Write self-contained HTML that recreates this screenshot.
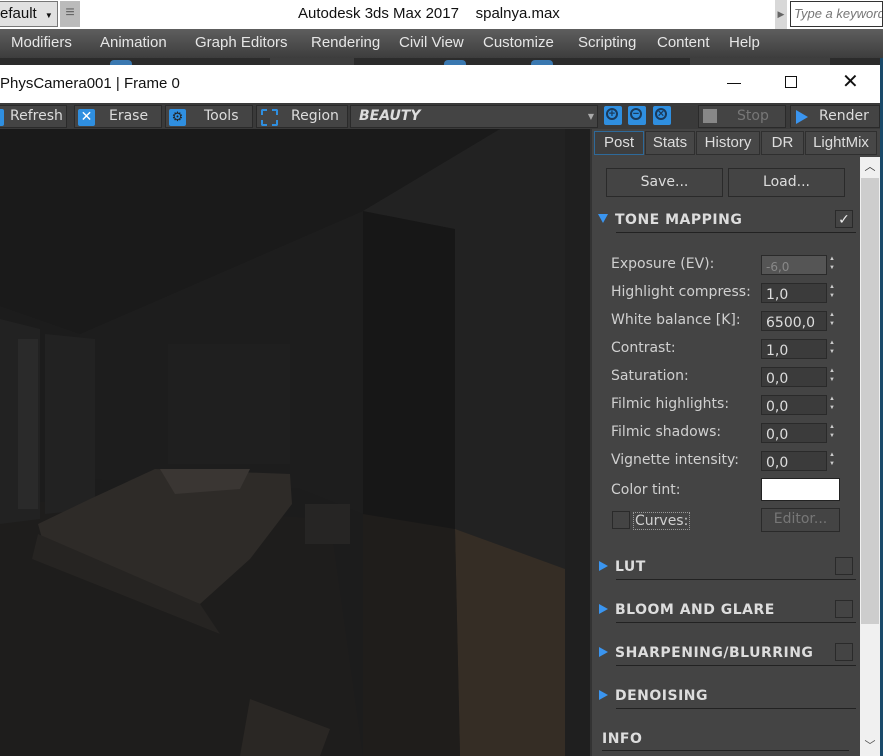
<!DOCTYPE html>
<html><head><meta charset="utf-8"><style>
*{margin:0;padding:0;box-sizing:border-box}
body{width:883px;height:756px;overflow:hidden;position:relative;background:#444;font-family:"Liberation Sans","DejaVu Sans",sans-serif}
.a{position:absolute}
.top{left:0;top:0;width:883px;height:29px;background:#fff}
.menu{left:0;top:29px;width:883px;height:29px;background:linear-gradient(#5e5e5e,#3d3d3d);color:#e6e6e6;font-size:15px}
.menu span{position:absolute;top:5px}
.strip{left:0;top:58px;width:883px;height:8px;background:#2b2b2b}
.wtitle{left:0;top:65px;width:880px;height:38px;background:#fff;font-size:15px;color:#111}
.tb{left:0;top:103px;width:880px;height:26px;background:#3a3a3a}
.btn{position:absolute;top:2px;height:23px;background:#444;border:1px solid #2a2a2a;color:#ddd;font-size:14px;font-family:"DejaVu Sans",sans-serif;line-height:21px;white-space:nowrap;overflow:hidden}
.ic{position:absolute;top:3px;width:17px;height:17px;background:#2f8fe0;border-radius:2px}
.panel{left:592px;top:129px;width:268px;height:627px;background:#444}
.lbl{position:absolute;color:#d0d0d0;font-size:14px;font-family:"DejaVu Sans",sans-serif;left:19px}
.fld{position:absolute;left:169px;width:66px;height:20px;background:#3b3b3b;border:1px solid #2a2a2a;color:#ddd;font-size:14px;padding-left:4px;line-height:22px;font-family:"DejaVu Sans",sans-serif}
.spin{position:absolute;left:237px;width:7px;height:20px;color:#ccc;font-size:6px;line-height:9px}
.sec{position:absolute;left:23px;color:#ddd;font-size:14px;font-weight:bold;font-family:"DejaVu Sans",sans-serif;letter-spacing:.5px}
.tri{position:absolute;left:7px;width:0;height:0;border-top:5px solid transparent;border-bottom:5px solid transparent;border-left:9px solid #3a95f0}
.line{position:absolute;left:24px;width:240px;height:1px;background:#222}
.cb{position:absolute;left:243px;width:18px;height:18px;border:1px solid #2a2a2a;background:#444}
.tab{position:absolute;top:2px;height:24px;border:1px solid #2f2f2f;background:#474747;color:#ddd;font-size:15px;text-align:center;line-height:22px}
.zm{position:absolute;top:3px;width:18px;height:19px;background:#2f8fe0;border-radius:2px}
.zm i{position:absolute;left:2px;top:2px;width:12px;height:12px;border:2px solid #1a3a5a;border-radius:50%;color:#1a3a5a;font-style:normal;font-size:11px;line-height:8px;text-align:center;font-weight:bold}
</style></head><body>
<div class="a top">
 <div class="a" style="left:0;top:1px;width:58px;height:26px;background:#e1e1e1;border:1px solid #777;border-left:none;font-size:15px;line-height:24px;color:#111">efault <span style="font-size:8px;margin-left:4px">▼</span></div>
 <div class="a" style="left:60px;top:1px;width:20px;height:26px;background:#bbb;color:#666;text-align:center;line-height:24px">≡</div>
 <div class="a" style="left:298px;top:5px;font-size:15px;color:#111">Autodesk 3ds Max 2017&nbsp;&nbsp;&nbsp;&nbsp;spalnya.max</div>
 <div class="a" style="left:775px;top:0;width:12px;height:29px;background:#d8d8d8;color:#666;font-size:9px;line-height:29px;text-align:center">▶</div>
 <div class="a" style="left:790px;top:1px;width:93px;height:26px;border:1px solid #333;background:#fff;font-style:italic;color:#777;font-size:13px;line-height:24px;padding-left:3px;white-space:nowrap;overflow:hidden">Type a keyword</div>
</div>
<div class="a menu">
 <span style="left:11px">Modifiers</span><span style="left:100px">Animation</span><span style="left:195px">Graph Editors</span><span style="left:311px">Rendering</span><span style="left:399px">Civil View</span><span style="left:483px">Customize</span><span style="left:578px">Scripting</span><span style="left:657px">Content</span><span style="left:729px">Help</span>
</div>
<div class="a strip">
 <div class="a" style="left:110px;top:2px;width:22px;height:6px;background:#3a78b0;border-radius:4px 4px 0 0"></div>
 <div class="a" style="left:270px;top:0;width:84px;height:8px;background:#3e3e3e"></div>
 <div class="a" style="left:444px;top:2px;width:22px;height:6px;background:#3a78b0;border-radius:4px 4px 0 0"></div>
 <div class="a" style="left:531px;top:2px;width:22px;height:6px;background:#3a78b0;border-radius:4px 4px 0 0"></div>
 <div class="a" style="left:690px;top:0;width:140px;height:8px;background:#3e3e3e"></div>
</div>
<div class="a wtitle">
 <div class="a" style="left:0;top:10px">PhysCamera001 | Frame 0</div>
 <div class="a" style="left:727px;top:18px;width:14px;height:1px;background:#111"></div>
 <div class="a" style="left:785px;top:11px;width:12px;height:12px;border:1px solid #111"></div>
 <div class="a" style="left:842px;top:4px;font-size:20px;font-weight:normal">✕</div>
</div>
<div class="a" style="left:880px;top:58px;width:3px;height:698px;background:#1a4a6a"></div>
<div class="a tb">
 <div class="btn" style="left:-3px;width:70px"><div class="ic" style="left:0;width:6px"></div><span style="margin-left:12px">Refresh</span></div>
 <div class="btn" style="left:74px;width:88px"><div class="ic" style="left:3px;color:#fff;font-size:14px;line-height:17px;text-align:center;font-weight:bold">✕</div><span style="margin-left:34px">Erase</span></div>
 <div class="btn" style="left:165px;width:88px"><div class="ic" style="left:3px;color:#222;font-size:13px;line-height:17px;text-align:center">⚙</div><span style="margin-left:38px">Tools</span></div>
 <div class="btn" style="left:256px;width:92px"><div class="ic" style="left:4px;background:none;border:2px dashed #2f8fe0"></div><span style="margin-left:34px">Region</span></div>
 <div class="btn" style="left:350px;width:248px;font-style:italic;font-weight:bold;padding-left:8px">BEAUTY<span style="position:absolute;right:3px;font-size:8px;font-style:normal;color:#aaa">▼</span></div>
 <div class="zm" style="left:604px"><i>+</i></div>
 <div class="zm" style="left:628px"><i>−</i></div>
 <div class="zm" style="left:653px"><i>×</i></div>
 <div class="btn" style="left:698px;width:88px;color:#777"><div class="a" style="left:4px;top:3px;width:14px;height:14px;background:#888"></div><span style="margin-left:38px">Stop</span></div>
 <div class="btn" style="left:790px;width:90px"><div class="a" style="left:5px;top:4px;border-top:7px solid transparent;border-bottom:7px solid transparent;border-left:12px solid #3a95f0"></div><span style="margin-left:28px">Render</span></div>
</div>
<svg class="a" style="left:0;top:129px" width="590" height="627" viewBox="0 0 590 627">
 <rect width="590" height="627" fill="#1c1c1c"/>
 <polygon points="0,0 500,0 363,82 80,205 0,177" fill="#1a1a1a"/>
 <polygon points="80,205 363,82 363,385 300,360 80,350" fill="#1d1d1d"/>
 <polygon points="363,82 455,100 455,400 363,390" fill="#171717"/>
 <polygon points="363,82 500,0 565,0 565,627 455,627 455,100" fill="#222"/>
 <rect x="565" y="0" width="25" height="627" fill="#1f1f1f"/>
 <polygon points="455,400 565,440 565,627 460,627" fill="#352d25"/>
 <polygon points="363,385 455,400 460,627 363,627" fill="#1f1d1b"/>
 <polygon points="0,370 330,390 363,627 0,627" fill="#1e1d1c"/>
 <rect x="168" y="215" width="122" height="120" fill="#1f1f1f"/>
 <polygon points="0,190 40,200 40,390 0,395" fill="#222"/>
 <rect x="18" y="210" width="20" height="170" fill="#2a2a2a"/>
 <polygon points="45,205 95,210 95,380 45,385" fill="#222"/>
 <polygon points="155,340 290,345 292,375 250,430 200,475 45,420 38,395 90,370" fill="#2e2b28"/>
 <polygon points="160,340 250,340 240,360 175,365" fill="#3a3633"/>
 <polygon points="38,405 200,475 220,505 32,430" fill="#262422"/>
 <rect x="305" y="375" width="45" height="40" fill="#262524"/>
 <polygon points="250,570 330,600 320,627 240,627" fill="#2a2724"/>
</svg>
<div class="a" style="left:590px;top:129px;width:2px;height:627px;background:#333"></div>
<div class="a panel">
 <div class="tab" style="left:2px;width:50px;background:#3e3e3e;border-color:#2e6a9a">Post</div>
 <div class="tab" style="left:53px;width:50px">Stats</div>
 <div class="tab" style="left:104px;width:64px">History</div>
 <div class="tab" style="left:169px;width:43px">DR</div>
 <div class="tab" style="left:213px;width:72px">LightMix</div>
 <div class="btn" style="left:14px;top:39px;width:117px;height:29px;line-height:27px;text-align:center;background:#444">Save...</div>
 <div class="btn" style="left:136px;top:39px;width:117px;height:29px;line-height:27px;text-align:center;background:#444">Load...</div>
 <div class="a" style="left:6px;top:85px;border-left:5px solid transparent;border-right:5px solid transparent;border-top:9px solid #3a95f0"></div>
 <div class="sec" style="top:83px">TONE MAPPING</div>
 <div class="cb" style="top:81px;color:#eee;font-size:14px;text-align:center;line-height:16px">✓</div>
 <div class="line" style="top:103px"></div>
 <div class="lbl" style="top:127px">Exposure (EV):</div><div class="fld" style="top:126px;background:#555;color:#888;font-size:12px">-6,0</div><div class="spin" style="top:126px">▲<br>▼</div>
 <div class="lbl" style="top:155px">Highlight compress:</div><div class="fld" style="top:154px">1,0</div><div class="spin" style="top:154px">▲<br>▼</div>
 <div class="lbl" style="top:183px">White balance [K]:</div><div class="fld" style="top:182px">6500,0</div><div class="spin" style="top:182px">▲<br>▼</div>
 <div class="lbl" style="top:211px">Contrast:</div><div class="fld" style="top:210px">1,0</div><div class="spin" style="top:210px">▲<br>▼</div>
 <div class="lbl" style="top:239px">Saturation:</div><div class="fld" style="top:238px">0,0</div><div class="spin" style="top:238px">▲<br>▼</div>
 <div class="lbl" style="top:267px">Filmic highlights:</div><div class="fld" style="top:266px">0,0</div><div class="spin" style="top:266px">▲<br>▼</div>
 <div class="lbl" style="top:295px">Filmic shadows:</div><div class="fld" style="top:294px">0,0</div><div class="spin" style="top:294px">▲<br>▼</div>
 <div class="lbl" style="top:323px">Vignette intensity:</div><div class="fld" style="top:322px">0,0</div><div class="spin" style="top:322px">▲<br>▼</div>
 <div class="lbl" style="top:353px">Color tint:</div><div class="a" style="left:169px;top:349px;width:79px;height:23px;background:#fff;border:1px solid #222"></div>
 <div class="a" style="left:20px;top:382px;width:18px;height:18px;border:1px solid #2a2a2a"></div>
 <div class="lbl" style="top:383px;left:41px;border:1px dotted #999;padding:0 1px">Curves:</div>
 <div class="btn" style="left:169px;top:379px;width:79px;height:24px;color:#777;text-align:center;font-size:14px">Editor...</div>
 <div class="tri" style="top:432px"></div><div class="sec" style="top:430px">LUT</div><div class="cb" style="top:428px"></div><div class="line" style="top:450px"></div>
 <div class="tri" style="top:475px"></div><div class="sec" style="top:473px">BLOOM AND GLARE</div><div class="cb" style="top:471px"></div><div class="line" style="top:493px"></div>
 <div class="tri" style="top:518px"></div><div class="sec" style="top:516px">SHARPENING/BLURRING</div><div class="cb" style="top:514px"></div><div class="line" style="top:536px"></div>
 <div class="tri" style="top:561px"></div><div class="sec" style="top:559px">DENOISING</div><div class="line" style="top:579px"></div>
 <div class="sec" style="top:602px;left:10px">INFO</div><div class="a" style="left:10px;top:621px;width:247px;height:1px;background:#222"></div>
</div>
<div class="a" style="left:860px;top:157px;width:20px;height:599px;background:#f0f0f0"></div>
<div class="a" style="left:860px;top:157px;width:20px;height:20px;color:#333;font-size:11px;text-align:center;line-height:20px">︿</div>
<div class="a" style="left:861px;top:178px;width:18px;height:446px;background:#cdcdcd"></div>
<div class="a" style="left:860px;top:736px;width:20px;height:20px;color:#555;font-size:11px;text-align:center;line-height:20px">﹀</div>
</body></html>
